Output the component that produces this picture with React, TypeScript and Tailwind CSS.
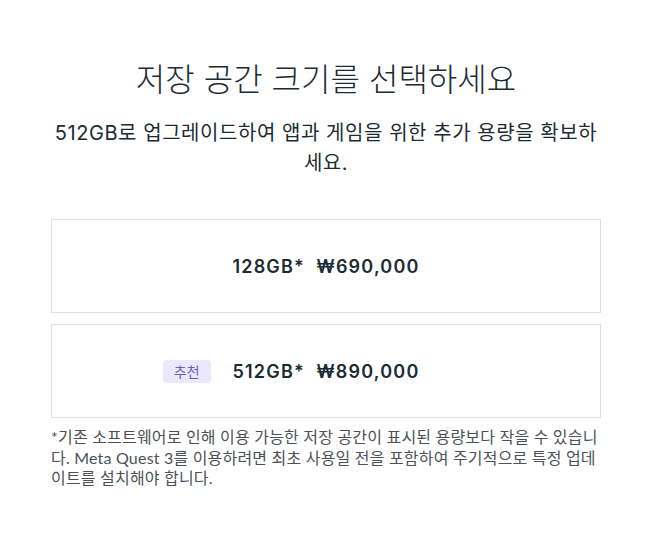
import React from "react"

const sans = "font-['Inter','Noto_Sans_CJK_KR',sans-serif]"

interface OptionProps {
  size: string
  price: string
  badge?: string
}

function StorageOption({ size, price, badge }: OptionProps) {
  return (
    <div className="h-[94px] border border-[#dcdfe2] flex items-center justify-center">
      <div className="relative flex items-center">
        {badge && (
          <span className="absolute right-full mr-[22px] px-[11px] h-[23px] flex items-center rounded-[4px] bg-[#ebe8fb] text-[#6a5fc1] text-[14px] whitespace-nowrap">
            {badge}
          </span>
        )}
        <span className="text-[18px] font-semibold text-[#1c2b33] tracking-[1.2px]">
          {size}&nbsp; {price}
        </span>
      </div>
    </div>
  )
}

export default function App() {
  return (
    <div className={`w-[652px] h-[536px] bg-white ${sans}`}>
      <div className="w-[550px] mx-auto pt-[59px]">
        <h1 className="text-center text-[32px] leading-[42px] font-light text-[#1c2b33]">
          저장 공간 크기를 선택하세요
        </h1>
        <p className="mt-[17px] text-center text-[20px] leading-[30px] tracking-[0.55px] text-[#1c2b33]">
          512GB로 업그레이드하여 앱과 게임을 위한 추가 용량을 확보하세요.
        </p>
        <div className="mt-[41px] flex flex-col gap-[11px]">
          <StorageOption size="128GB*" price="₩690,000" />
          <StorageOption size="512GB*" price="₩890,000" badge="추천" />
        </div>
        <p className="mt-[9px] text-[16px] leading-[20.5px] tracking-[0.2px] text-[#4b5257] font-['Lato','Noto_Sans_CJK_KR',sans-serif]">
          *기존 소프트웨어로 인해 이용 가능한 저장 공간이 표시된 용량보다 작을 수 있습니다. Meta Quest 3를 이용하려면 최초 사용일 전을 포함하여 주기적으로 특정 업데이트를 설치해야 합니다.
        </p>
      </div>
    </div>
  )
}
